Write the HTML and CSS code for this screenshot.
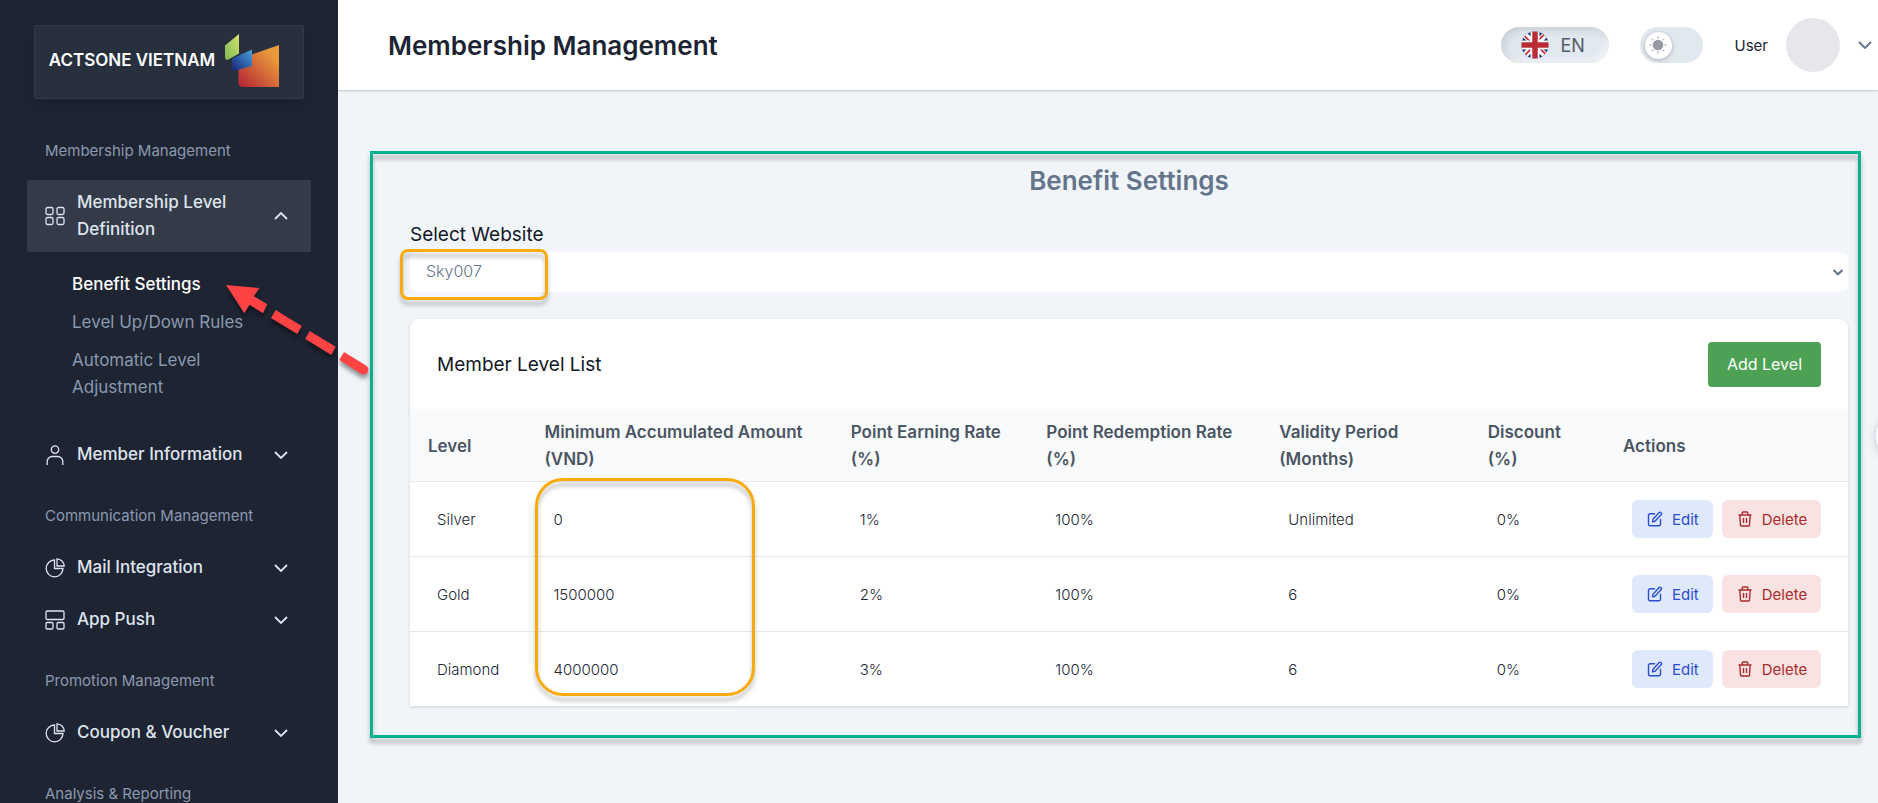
FILE: index.html
```html
<!DOCTYPE html>
<html lang="en">
<head>
<meta charset="utf-8">
<title>Membership Management</title>
<link rel="stylesheet" href="styles.css">
</head>
<body>
<svg class="defs" width="0" height="0" aria-hidden="true">
  <defs>
    <linearGradient id="lg-green" x1="0" y1="1" x2="1" y2="0"><stop offset="0" stop-color="#7cb854"/><stop offset="1" stop-color="#dbe36e"/></linearGradient>
    <linearGradient id="lg-blue" x1="0" y1="1" x2="1" y2="0"><stop offset="0.1" stop-color="#1d2f80"/><stop offset="1" stop-color="#45a5e0"/></linearGradient>
    <linearGradient id="lg-red" x1="0" y1="1" x2="1" y2="0"><stop offset="0" stop-color="#b32134"/><stop offset="0.8" stop-color="#ea9a3d"/></linearGradient>
  </defs>
  <symbol id="i-down" viewBox="0 0 14 8"><path d="M1 1l6 6 6-6" fill="none" stroke="currentColor" stroke-width="1.8"/></symbol>
  <symbol id="i-grid" viewBox="0 0 20 20"><g fill="none" stroke="currentColor" stroke-width="1.3"><rect x="1" y="1.5" width="7" height="7" rx="1.5"/><rect x="12" y="1.5" width="7" height="7" rx="1.5"/><rect x="1" y="11.5" width="7" height="7" rx="1.5"/><rect x="12" y="11.5" width="7" height="7" rx="1.5"/></g></symbol>
  <symbol id="i-user" viewBox="0 0 20 20"><g fill="none" stroke="currentColor" stroke-width="1.3"><circle cx="10" cy="4.6" r="3.7"/><path d="M2.2 20v-3.5a5 5 0 0 1 5-5h5.6a5 5 0 0 1 5 5V20"/></g></symbol>
  <symbol id="i-pie" viewBox="0 0 20 20"><g fill="none" stroke="currentColor" stroke-width="1.3"><path d="M9.500 2A8.400 8.400 0 1 0 18 10.500H9.500z"/><path d="M12 .8a7.500 7.500 0 0 1 7.200 7.200H12z"/></g></symbol>
  <symbol id="i-layout" viewBox="0 0 20 20"><g fill="none" stroke="currentColor" stroke-width="1.3"><rect x="1" y="1" width="18" height="8.500" rx="1.200"/><rect x="1" y="12.500" width="7" height="6.500" rx="1.200"/><rect x="12" y="12.500" width="7" height="6.500" rx="1.200"/></g></symbol>
  <symbol id="i-edit" viewBox="0 0 16 16"><g fill="none" stroke="currentColor" stroke-width="1.400" stroke-linejoin="round" stroke-linecap="round"><path d="M7.500 2.700H3A1.500 1.500 0 0 0 1.500 4.200v9A1.500 1.500 0 0 0 3 14.700h9a1.500 1.500 0 0 0 1.500-1.500V8.500"/><path d="M6 8.300l6.200-6.800a1.100 1.100 0 0 1 1.600 0l.5.500a1.100 1.100 0 0 1 0 1.600L8 10.300l-2.500.6z"/></g></symbol>
  <symbol id="i-trash" viewBox="0 0 16 16"><g fill="none" stroke="currentColor" stroke-width="1.400" stroke-linejoin="round"><path d="M1.500 4h13M5.200 3.800V2a1 1 0 0 1 1-1h3.600a1 1 0 0 1 1 1v1.800M2.800 4l.7 9.800a1.200 1.200 0 0 0 1.200 1.200h6.600a1.200 1.200 0 0 0 1.200-1.200L13.200 4M6.500 7v5M9.500 7v5"/></g></symbol>
</svg>

<div class="app">
  <aside class="sidebar">
    <a class="brand" href="#">
      <span>ACTSONE VIETNAM</span>
      <svg width="54" height="53" viewBox="0 0 54 53" aria-hidden="true">
        <path d="M13.500 29L27 24V20.500L54 11v42H18q-4.500 0-4.500-4.500z" fill="url(#lg-red)"/>
        <path d="M7 24.500L27 15.500V32L11 36.500H7z" fill="url(#lg-blue)"/>
        <path d="M0 11.500L14 0V19.500L2.500 26Q0 26 0 23z" fill="url(#lg-green)"/>
      </svg>
    </a>
    <nav class="nav">
      <h3 class="nav-title">Membership Management</h3>
      <button class="nav-item active" type="button" aria-expanded="true"><svg class="ico"><use href="#i-grid"/></svg><span>Membership Level Definition</span><svg class="chev up"><use href="#i-down"/></svg></button>
      <ul class="subnav">
        <li><a class="current" href="#">Benefit Settings</a></li>
        <li><a href="#">Level Up/Down Rules</a></li>
        <li><a href="#">Automatic Level Adjustment</a></li>
      </ul>
      <button class="nav-item" type="button"><svg class="ico"><use href="#i-user"/></svg><span>Member Information</span><svg class="chev"><use href="#i-down"/></svg></button>
      <h3 class="nav-title">Communication Management</h3>
      <button class="nav-item" type="button"><svg class="ico"><use href="#i-pie"/></svg><span>Mail Integration</span><svg class="chev"><use href="#i-down"/></svg></button>
      <button class="nav-item" type="button"><svg class="ico"><use href="#i-layout"/></svg><span>App Push</span><svg class="chev"><use href="#i-down"/></svg></button>
      <h3 class="nav-title">Promotion Management</h3>
      <button class="nav-item" type="button"><svg class="ico"><use href="#i-pie"/></svg><span>Coupon &amp; Voucher</span><svg class="chev"><use href="#i-down"/></svg></button>
      <h3 class="nav-title">Analysis &amp; Reporting</h3>
    </nav>
  </aside>

  <div class="page">
    <header class="topbar">
      <h1>Membership Management</h1>
      <button class="lang" type="button">
        <svg width="28" height="28" viewBox="0 0 28 28" aria-hidden="true">
          <clipPath id="fc"><circle cx="14" cy="14" r="13.500"/></clipPath>
          <g clip-path="url(#fc)"><rect width="28" height="28" fill="#0d2a6c"/><path d="M0 0l28 28M28 0L0 28" stroke="#fff" stroke-width="6"/><path d="M0 1.500l12 12M16 14.500l12 12M26.500 0l-12 12M13 15L0 28" stroke="#c8323c" stroke-width="1.800"/><path d="M14 0v28M0 14h28" stroke="#fff" stroke-width="9"/><path d="M14 0v28M0 14h28" stroke="#b92c35" stroke-width="5.500"/></g>
        </svg>
        <span>EN</span>
      </button>
      <button class="theme" type="button" aria-label="Toggle theme"><span class="knob"><svg width="18" height="18" viewBox="0 0 18 18"><circle cx="9" cy="9" r="5.300" fill="#9699a1"/><g stroke="#b9bbc1" stroke-width="1.600"><path d="M9 .5v2M9 15.500v2M.5 9h2M15.500 9h2M3 3l1.200 1.200M13.800 13.800L15 15M3 15l1.200-1.200M13.800 4.200L15 3"/></g></svg></span></button>
      <button class="account" type="button"><span>User</span><span class="avatar"></span><svg class="chev"><use href="#i-down"/></svg></button>
    </header>

    <main class="content">
      <section class="panel">
        <h2>Benefit Settings</h2>
        <label for="site">Select Website</label>
        <div class="select-wrap">
          <select id="site"><option>Sky007</option></select>
          <svg class="caret" viewBox="0 0 12 7"><path d="M1.500 1L6 5.200 10.500 1" fill="none" stroke="currentColor" stroke-width="2.200"/></svg>
          <span class="mark mark-select"></span>
        </div>
        <div class="card">
          <div class="card-head">
            <h4>Member Level List</h4>
            <button class="add" type="button">Add Level</button>
          </div>
          <table>
            <colgroup><col class="c1"><col class="c2"><col class="c3"><col class="c4"><col class="c5"><col class="c6"><col class="c7"></colgroup>
            <thead><tr><th>Level</th><th>Minimum Accumulated Amount<br>(VND)</th><th>Point Earning Rate<br>(%)</th><th>Point Redemption Rate<br>(%)</th><th>Validity Period<br>(Months)</th><th>Discount<br>(%)</th><th>Actions</th></tr></thead>
            <tbody>
              <tr><td>Silver</td><td class="anchor">0<span class="mark mark-amount"></span></td><td>1%</td><td>100%</td><td>Unlimited</td><td>0%</td><td><div class="actions"><button class="edit" type="button"><svg><use href="#i-edit"/></svg>Edit</button><button class="delete" type="button"><svg><use href="#i-trash"/></svg>Delete</button></div></td></tr>
              <tr><td>Gold</td><td>1500000</td><td>2%</td><td>100%</td><td>6</td><td>0%</td><td><div class="actions"><button class="edit" type="button"><svg><use href="#i-edit"/></svg>Edit</button><button class="delete" type="button"><svg><use href="#i-trash"/></svg>Delete</button></div></td></tr>
              <tr><td>Diamond</td><td>4000000</td><td>3%</td><td>100%</td><td>6</td><td>0%</td><td><div class="actions"><button class="edit" type="button"><svg><use href="#i-edit"/></svg>Edit</button><button class="delete" type="button"><svg><use href="#i-trash"/></svg>Delete</button></div></td></tr>
            </tbody>
          </table>
        </div>
      </section>
    </main>
  </div>
</div>

<svg class="arrow" viewBox="220 275 155 110" aria-hidden="true">
  <g fill="#fd4343">
    <path d="M226 285l33.300 3-5.300 8.300 13.300 8-4.300 9-13.500-8.500-5.200 8.500z"/>
    <path d="M275.700 310l26 16-4.400 8-26.300-16z"/>
    <path d="M309.700 331l26 15.800-4.400 8.200-26-16z"/>
    <path d="M344 352l22 13.500a4.700 4.700 0 0 1-5 8.300L339.400 360z"/>
  </g>
</svg>
<button class="float" type="button" aria-label="Settings"></button>
</body>
</html>
```

FILE: styles.css
```css
* { box-sizing: border-box; }
body { margin: 0; font-family: Inter, "Liberation Sans", sans-serif; font-size: 16px; color: #1c2434; background: #f1f5f9; overflow: hidden; }
h1, h2, h3, h4, ul { margin: 0; padding: 0; }
button { border: 0; background: none; font: inherit; color: inherit; padding: 0; cursor: pointer; }
a { text-decoration: none; }
.defs { position: absolute; }
.app { display: flex; height: 100vh; }

.sidebar { flex: 0 0 338px; background: #1f2433; padding: 25px 27px 0; overflow: hidden; }
.brand { display: flex; align-items: center; justify-content: center; gap: 10px; height: 74px; margin: 0 7px; padding: 0 10px 4px 0; background: #28303e; border: 1px solid #323b49; border-radius: 2px; box-shadow: 0 8px 12px rgba(0, 0, 0, .12); color: #fff; font-size: 17px; font-weight: 600; white-space: nowrap; }
.nav { display: flex; flex-direction: column; padding-top: 38px; }
.nav-title { padding: 0 18px; margin-bottom: 15px; line-height: 28px; font-size: 15px; font-weight: 400; color: #8a99af; }
.nav-item { display: flex; align-items: center; gap: 12px; padding: 9px 23px 9px 18px; margin-bottom: 7px; border-radius: 2px; font-size: 17px; font-weight: 500; line-height: 27px; color: #dee4ee; text-align: left; }
.nav-item + .nav-title { margin-top: 18px; }
.nav-item span { flex: 1; }
.nav-item.active { background: #343a48; margin-bottom: 19px; }
.ico { flex: none; width: 20px; height: 20px; }
.chev { flex: none; width: 14px; height: 8px; }
.up { transform: rotate(180deg); }
.subnav { display: flex; flex-direction: column; gap: 11px; padding: 0 45px; margin-bottom: 31px; list-style: none; font-size: 17px; line-height: 27px; }
.subnav a { color: #8a99af; }
.subnav .current { color: #fff; font-weight: 500; }

.page { flex: 1; min-width: 0; }
.topbar { display: flex; align-items: center; height: 90px; padding: 0 6px 0 50px; background: #fff; box-shadow: 0 1px 2px rgba(0, 0, 0, .2); position: relative; }
.topbar h1 { flex: 1; font-size: 26px; font-weight: 600; }
.lang { display: flex; align-items: center; gap: 12px; width: 108px; height: 36px; padding-left: 20px; margin-right: 31px; border-radius: 18px; background: #e2e8f0; box-shadow: inset 3px 3px 8px rgba(0, 0, 0, .12), inset -3px -3px 6px rgba(255, 255, 255, .6); font-size: 18px; color: #555a68; }
.theme { display: flex; align-items: center; width: 63px; height: 36px; padding: 0 5px; margin-right: 32px; border-radius: 18px; background: #e2e8f0; }
.knob { display: flex; align-items: center; justify-content: center; width: 27px; height: 27px; border-radius: 50%; background: #fff; box-shadow: 0 1px 4px rgba(0, 0, 0, .25); }
.account { display: flex; align-items: center; gap: 18px; font-size: 15px; }
.account .chev { color: #64748b; }
.avatar { width: 54px; height: 54px; border-radius: 50%; background: #e5e7eb; }

.content { padding: 61px 17px 0 32px; }
.panel { position: relative; padding: 12px 13px 32px 40px; }
.panel::after { content: ""; position: absolute; inset: 0; border: 3px solid #05b18f; filter: drop-shadow(0 5px 2px rgba(0, 0, 0, .28)); pointer-events: none; }
.panel h2 { text-align: center; font-size: 26px; line-height: 36px; font-weight: 600; color: #64748b; }
.panel label { display: block; margin-top: 20px; padding-bottom: 2px; line-height: 31px; font-size: 19px; color: #111827; }
.select-wrap { position: relative; }
.select-wrap select { display: block; width: 100%; height: 40px; padding: 0 16px 2px; border: 0; border-radius: 8px; background: #fff; appearance: none; font: inherit; font-weight: 300; color: #64748b; }
.caret { position: absolute; right: 4px; top: 17px; width: 12px; height: 7px; color: #64748b; pointer-events: none; }
.mark { position: absolute; border: 3px solid #f9ab0b; filter: drop-shadow(0 5px 2px rgba(0, 0, 0, .26)); pointer-events: none; }
.mark-select { left: -10px; top: -3px; width: 148px; height: 51px; border-radius: 8px; }
.mark-amount { left: 9px; top: -4px; width: 220px; height: 218px; border-radius: 28px; }

.card { margin-top: 27px; border-radius: 9px 9px 0 0; background: #fff; box-shadow: 0 1px 3px rgba(0, 0, 0, .15); }
.card-head { display: flex; align-items: center; justify-content: space-between; height: 90px; padding: 0 27px; }
.card-head h4 { font-size: 19px; font-weight: 400; color: #111827; }
.add { height: 45px; padding: 0 19px; border-radius: 4px; background: #4ca154; color: #fff; font-size: 16px; }
table { width: 100%; table-layout: fixed; border-collapse: separate; border-spacing: 0; }
.c1 { width: 8.1%; } .c2 { width: 21.3%; } .c3 { width: 13.6%; } .c4 { width: 16.2%; } .c5 { width: 14.5%; } .c6 { width: 9.4%; } .c7 { width: 16.9%; }
th { height: 73px; padding: 10px 0 8px 18px; background: #f9fafb; border-bottom: 1px solid #e5e7eb; font-size: 17px; line-height: 27px; font-weight: 600; color: #4b5563; text-align: left; white-space: nowrap; }
td { height: 75px; padding: 0 0 0 27px; border-bottom: 1px solid #e5e7eb; font-size: 15px; font-weight: 300; color: #1c2434; white-space: nowrap; }
tr:last-child td { height: 74px; border-bottom: 0; }
.anchor { position: relative; }
.actions { display: flex; gap: 9px; font-weight: 400; }
.actions button { display: flex; align-items: center; gap: 9px; height: 38px; padding: 0 14px 0 15px; border-radius: 6px; }
.actions svg { width: 16px; height: 16px; }
.edit { background: #dee9fc; color: #2b4dd0; }
.delete { background: #f8e2e2; color: #ab2c2c; }

.arrow { position: absolute; left: 220px; top: 275px; width: 155px; height: 110px; filter: drop-shadow(0 4px 2px rgba(0, 0, 0, .4)); pointer-events: none; }
.float { position: fixed; right: -46px; top: 412px; width: 48px; height: 48px; border-radius: 50%; background: #fff; box-shadow: 0 2px 8px rgba(0, 0, 0, .2); }
```
